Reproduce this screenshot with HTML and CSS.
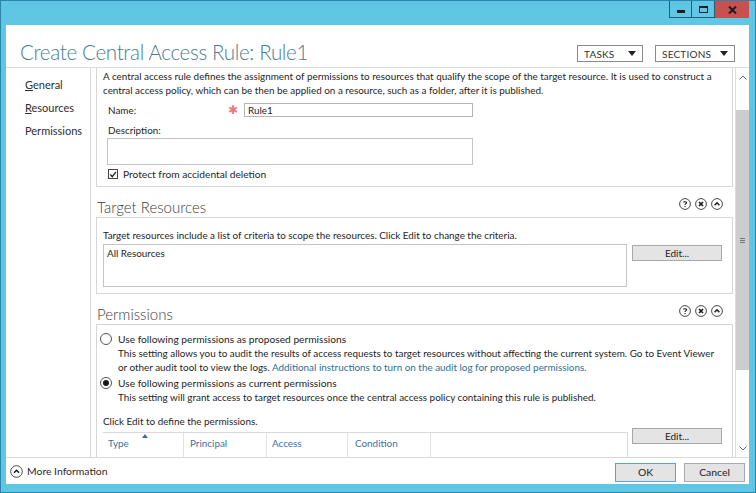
FILE: index.html
```html
<!DOCTYPE html>
<html>
<head>
<meta charset="utf-8">
<title>Create Central Access Rule: Rule1</title>
<link rel="stylesheet" href="styles.css">
</head>
<body>
<div class="window">
  <div class="titlebar">
    <div class="winctl">
      <span class="wbtn min"><i></i></span>
      <span class="wbtn max"><i></i></span>
      <span class="wbtn close"><svg width="9" height="8" viewBox="0 0 9 8"><path d="M1 0.5 L8 7.5 M8 0.5 L1 7.5" stroke="#1c1c1c" stroke-width="2"/></svg></span>
    </div>
  </div>
  <div class="client">
    <header class="head">
      <h1 class="title">Create Central Access Rule: Rule1</h1>
      <div class="menus">
        <button class="drop drop-tasks">TASKS <svg width="8" height="5" viewBox="0 0 8 5"><path d="M0 0 H8 L4 5 Z" fill="#222"/></svg></button>
        <button class="drop drop-sections">SECTIONS <svg width="8" height="5" viewBox="0 0 8 5"><path d="M0 0 H8 L4 5 Z" fill="#222"/></svg></button>
      </div>
    </header>
    <div class="main">
      <nav class="nav">
        <a class="navitem"><u>G</u>eneral</a>
        <a class="navitem"><u>R</u>esources</a>
        <a class="navitem">Permissions</a>
      </nav>
      <div class="pane">
        <div class="content">
          <section class="box general">
            <p class="intro">A central access rule defines the assignment of permissions to resources that qualify the scope of the target resource. It is used to construct a central access policy, which can be then be applied on a resource, such as a folder, after it is published.</p>
            <div class="namerow">
              <span class="lbl">Name:</span>
              <span class="req">✱</span>
              <span class="input">Rule1</span>
            </div>
            <div class="desclbl">Description:</div>
            <div class="textarea"></div>
            <div class="checkrow">
              <span class="check"><svg width="9" height="9" viewBox="0 0 9 9"><path d="M1.5 4.5 L3.7 7 L7.8 1.6" fill="none" stroke="#222" stroke-width="1.5"/></svg></span>
              <span>Protect from accidental deletion</span>
            </div>
          </section>

          <div class="sechead">
            <h2 class="sectitle">Target Resources</h2>
            <div class="secicons">
              <span class="ci"><svg width="12" height="12" viewBox="0 0 12 12"><circle cx="6" cy="6" r="5.4" fill="none" stroke="#333" stroke-width="0.9"/><path d="M4.4 4.6 C4.4 3.4 7.6 3.3 7.6 4.7 C7.6 5.6 6 5.7 6 6.9" fill="none" stroke="#222" stroke-width="1.1"/><circle cx="6" cy="8.6" r="0.7" fill="#222"/></svg></span>
              <span class="ci"><svg width="12" height="12" viewBox="0 0 12 12"><circle cx="6" cy="6" r="5.4" fill="none" stroke="#333" stroke-width="0.9"/><path d="M4 4 L8 8 M8 4 L4 8" stroke="#1a1a1a" stroke-width="1.7"/></svg></span>
              <span class="ci"><svg width="12" height="12" viewBox="0 0 12 12"><circle cx="6" cy="6" r="5.4" fill="none" stroke="#333" stroke-width="0.9"/><path d="M3.6 7.2 L6 4.8 L8.4 7.2" fill="none" stroke="#1a1a1a" stroke-width="1.5"/></svg></span>
            </div>
          </div>

          <section class="box target">
            <p class="line">Target resources include a list of criteria to scope the resources. Click Edit to change the criteria.</p>
            <div class="listrow">
              <div class="listbox">All Resources</div>
              <button class="btn edit">Edit...</button>
            </div>
          </section>

          <div class="sechead">
            <h2 class="sectitle">Permissions</h2>
            <div class="secicons">
              <span class="ci"><svg width="12" height="12" viewBox="0 0 12 12"><circle cx="6" cy="6" r="5.4" fill="none" stroke="#333" stroke-width="0.9"/><path d="M4.4 4.6 C4.4 3.4 7.6 3.3 7.6 4.7 C7.6 5.6 6 5.7 6 6.9" fill="none" stroke="#222" stroke-width="1.1"/><circle cx="6" cy="8.6" r="0.7" fill="#222"/></svg></span>
              <span class="ci"><svg width="12" height="12" viewBox="0 0 12 12"><circle cx="6" cy="6" r="5.4" fill="none" stroke="#333" stroke-width="0.9"/><path d="M4 4 L8 8 M8 4 L4 8" stroke="#1a1a1a" stroke-width="1.7"/></svg></span>
              <span class="ci"><svg width="12" height="12" viewBox="0 0 12 12"><circle cx="6" cy="6" r="5.4" fill="none" stroke="#333" stroke-width="0.9"/><path d="M3.6 7.2 L6 4.8 L8.4 7.2" fill="none" stroke="#1a1a1a" stroke-width="1.5"/></svg></span>
            </div>
          </div>

          <section class="box perms">
            <div class="radiorow">
              <span class="radio"></span>
              <span>Use following permissions as proposed permissions</span>
            </div>
            <p class="rdesc">This setting allows you to audit the results of access requests to target resources without affecting the current system. Go to Event Viewer or other audit tool to view the logs. <a class="link">Additional instructions to turn on the audit log for proposed permissions.</a></p>
            <div class="radiorow r2">
              <span class="radio on"></span>
              <span>Use following permissions as current permissions</span>
            </div>
            <p class="rdesc">This setting will grant access to target resources once the central access policy containing this rule is published.</p>
            <p class="clickedit">Click Edit to define the permissions.</p>
            <div class="tablerow">
              <div class="table">
                <div class="th c1">Type<svg class="sort" width="6" height="4" viewBox="0 0 6 4"><path d="M0 4 L3 0 L6 4 Z" fill="#3b6f96"/></svg></div>
                <div class="th c2">Principal</div>
                <div class="th c3">Access</div>
                <div class="th c4">Condition</div>
                <div class="th c5"></div>
              </div>
              <button class="btn edit">Edit...</button>
            </div>
          </section>
        </div>
        <div class="vscroll">
          <span class="arrow"><svg width="8" height="5" viewBox="0 0 8 5"><path d="M0.5 4.5 L4 1 L7.5 4.5" fill="none" stroke="#666" stroke-width="1"/></svg></span>
          <div class="track">
            <div class="thumb"><span class="grip"></span></div>
          </div>
          <span class="arrow"><svg width="8" height="5" viewBox="0 0 8 5"><path d="M0.5 0.5 L4 4 L7.5 0.5" fill="none" stroke="#666" stroke-width="1"/></svg></span>
        </div>
      </div>
    </div>
    <footer class="foot">
      <div class="more">
        <svg width="13" height="13" viewBox="0 0 13 13"><circle cx="6.5" cy="6.5" r="5.8" fill="none" stroke="#333" stroke-width="0.9"/><path d="M4 7.8 L6.5 5.3 L9 7.8" fill="none" stroke="#1a1a1a" stroke-width="1.5"/></svg>
        <span>More Information</span>
      </div>
      <div class="actions">
        <button class="btn ok">OK</button>
        <button class="btn cancel">Cancel</button>
      </div>
    </footer>
  </div>
</div>
</body>
</html>
```

FILE: styles.css
```css
* { box-sizing: border-box; }
html, body { margin: 0; padding: 0; }
body {
  width: 756px;
  height: 493px;
  overflow: hidden;
  font-family: Lato, "Open Sans", "Liberation Sans", sans-serif;
  font-size: 9.9px;
  color: #1e1e1e;
  background: #5fc6e3;
}
p { margin: 0; }
button { font-family: inherit; }

.window {
  width: 756px;
  height: 493px;
  border: 1px solid #2a86a8;
  background: #5fc6e3;
  display: flex;
  flex-direction: column;
}

/* title bar */
.titlebar {
  height: 24px;
  flex: none;
  display: flex;
  justify-content: flex-end;
  align-items: flex-start;
  padding-right: 6px;
}
.winctl { display: flex; height: 17px; }
.wbtn {
  display: flex;
  align-items: center;
  justify-content: center;
  height: 17px;
}
.min, .max {
  width: 23px;
  border: 1px solid #235f77;
  border-top: none;
  background: #5fc6e3;
}
.max { border-left: none; }
.min i { width: 8px; height: 3px; background: #1c1c1c; margin-top: 5px; }
.max i { width: 9px; height: 7px; border: 1px solid #1c1c1c; border-top-width: 2px; }
.close { width: 34px; background: #c75050; }

/* client */
.client {
  flex: 1;
  margin: 0 6px 8px 5px;
  background: #fff;
  display: flex;
  flex-direction: column;
  min-height: 0;
}

.head {
  height: 42px;
  flex: none;
  display: flex;
  justify-content: space-between;
  align-items: flex-start;
  padding: 0 14px;
}
.title {
  margin: 14px 0 0 0;
  font-size: 20.6px;
  line-height: 26px;
  font-weight: 300;
  color: #4a7d93;
  letter-spacing: -0.35px;
}
.menus { display: flex; gap: 12px; margin-top: 20px; }
.drop {
  height: 17px;
  background: #fff;
  border: 1px solid #8a8a8a;
  font-size: 10px;
  color: #333;
  display: flex;
  align-items: center;
  justify-content: space-between;
  padding: 0 6px;
  letter-spacing: 0.2px;
}
.drop-tasks { width: 66px; }
.drop-sections { width: 80px; }

.main {
  height: 391px;
  flex: none;
  display: flex;
  border-top: 1px solid #d9d9d9;
  border-bottom: 1px solid #d9d9d9;
}
.nav {
  width: 85px;
  border-right: 1px solid #d9d9d9;
  padding: 5px 0 0 19px;
  display: flex;
  flex-direction: column;
}
.navitem {
  font-size: 11px;
  line-height: 23px;
  color: #2e2e2e;
}
.navitem u { text-decoration-thickness: 1px; text-underline-offset: 1px; }

.pane {
  flex: 1;
  display: flex;
  min-width: 0;
}
.content {
  flex: 1;
  padding: 0 2px 0 5px;
  overflow: hidden;
}

.box {
  border: 1px solid #d6d6d6;
}
.general {
  border-top: none;
  padding: 1px 6px 5px 6px;
}
.intro { line-height: 14px; }
.namerow {
  display: flex;
  align-items: center;
  height: 14px;
  margin-top: 6px;
  padding-left: 5px;
}
.lbl { width: 120px; }
.req { width: 16px; color: #e8787c; font-size: 12px; line-height: 14px; }
.input {
  width: 229px;
  height: 14px;
  border: 1px solid #b4b4b4;
  padding: 0 3px;
  line-height: 12px;
}
.desclbl { margin-top: 6px; padding-left: 5px; line-height: 14px; }
.textarea {
  width: 366px;
  height: 27px;
  margin: 1px 0 0 4px;
  border: 1px solid #c4c4c4;
}
.checkrow {
  display: flex;
  align-items: center;
  height: 14px;
  margin-top: 2px;
  padding-left: 5px;
  gap: 5px;
  font-size: 10.2px;
}
.check {
  width: 10px;
  height: 10px;
  border: 1px solid #444;
  display: flex;
  align-items: center;
  justify-content: center;
}

.sechead {
  height: 30px;
  display: flex;
  justify-content: space-between;
  align-items: flex-end;
  padding: 0 10px 0 1px;
}
.sectitle {
  margin: 0;
  font-size: 15px;
  line-height: 20px;
  font-weight: 300;
  color: #3e3e3e;
}
.secicons {
  display: flex;
  gap: 4px;
  margin-bottom: 7px;
}
.ci { width: 12px; height: 12px; display: block; }
.ci svg { display: block; }

.target { padding: 10px 10px 6px 6px; }
.target .line { line-height: 14px; }
.listrow {
  display: flex;
  align-items: flex-start;
  gap: 5px;
  margin-top: 2px;
}
.listbox {
  width: 524px;
  height: 43px;
  border: 1px solid #c4c4c4;
  padding: 2px 3px;
  line-height: 12px;
}
.btn {
  height: 16px;
  border: 1px solid #a9a9a9;
  background: #e4e4e4;
  font-size: 10px;
  color: #222;
  padding: 0;
}
.edit { width: 90px; margin-top: 1px; }

.perms { padding: 7px 10px 0 3px; }
.radiorow {
  display: flex;
  align-items: center;
  height: 14px;
  gap: 6px;
  font-size: 10.2px;
}
.r2 { margin-top: 2px; }
.radio {
  width: 12px;
  height: 12px;
  border-radius: 50%;
  border: 1px solid #555;
  display: flex;
  align-items: center;
  justify-content: center;
}
.radio.on::after {
  content: "";
  width: 6px;
  height: 6px;
  border-radius: 50%;
  background: #1a1a1a;
}
.rdesc {
  padding-left: 18px;
  line-height: 14px;
}
.link { color: #2a6f97; }
.clickedit {
  margin-top: 10px;
  padding-left: 3px;
  line-height: 14px;
}
.tablerow {
  display: flex;
  align-items: flex-start;
  gap: 4px;
  padding-left: 3px;
}
.table {
  width: 525px;
  margin-top: 4px;
  height: 30px;
  border-top: 1px solid #dadada;
  border-right: 1px solid #dadada;
  display: flex;
}
.th {
  position: relative;
  height: 100%;
  border-right: 1px solid #e2e2e2;
  color: #3c72a0;
  line-height: 20px;
  padding-left: 5px;
}
.c1 { width: 81px; }
.c2 { width: 83px; padding-left: 6px; }
.c3 { width: 81px; }
.c4 { width: 83px; padding-left: 7px; }
.c5 { flex: 1; border-right: none; }
.sort { position: absolute; left: 39px; top: 1px; }
.tablerow .edit { margin-top: 0; }

/* scrollbar */
.vscroll {
  width: 14px;
  border-left: 1px solid #dcdcdc;
  display: flex;
  flex-direction: column;
  align-items: stretch;
}
.arrow {
  height: 18px;
  display: flex;
  align-items: center;
  justify-content: center;
}
.track { flex: 1; padding-top: 24px; }
.thumb {
  height: 260px;
  background: #cdcdcd;
  display: flex;
  align-items: center;
  justify-content: center;
}
.grip {
  width: 5px;
  height: 5px;
  border-top: 1px solid #777;
  border-bottom: 1px solid #777;
  position: relative;
}
.grip::after {
  content: "";
  position: absolute;
  left: 0; right: 0; top: 1px;
  border-top: 1px solid #777;
}

/* footer */
.foot {
  flex: 1;
  display: flex;
  justify-content: space-between;
  align-items: center;
  padding: 0 4px 0 4px;
}
.more {
  display: flex;
  align-items: center;
  gap: 4px;
  font-size: 10.4px;
  color: #2a2a2a;
}
.more svg { display: block; }
.actions { display: flex; gap: 8px; margin-top: 2px; }
.ok, .cancel { width: 61px; height: 19px; font-size: 10.4px; }
.ok { border-color: #5aa0de; }
```
